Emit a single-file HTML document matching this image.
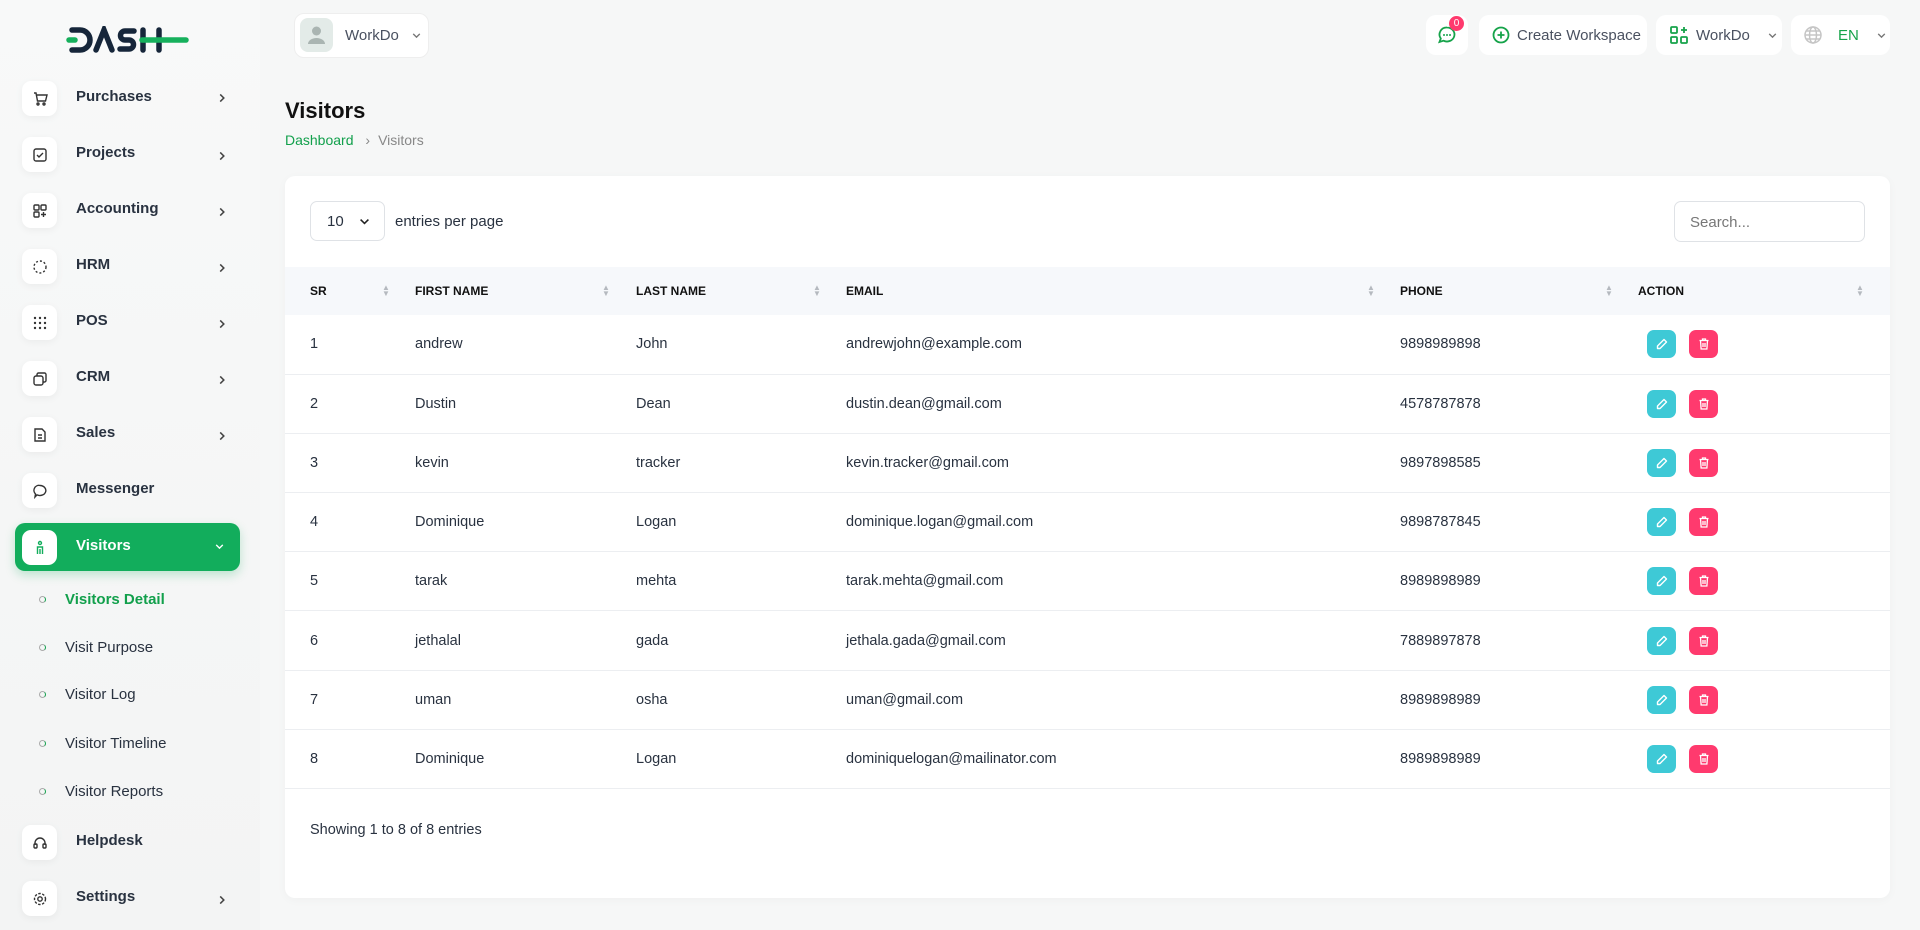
<!DOCTYPE html>
<html><head><meta charset="utf-8"><style>
*{box-sizing:border-box;margin:0;padding:0}
body{width:1920px;height:930px;overflow:hidden;background:#f6f7f7;font-family:"Liberation Sans",sans-serif;color:#293240;position:relative}
.a{position:absolute}
.ib{position:absolute;left:22px;width:35px;height:35px;background:#fff;border-radius:9px;box-shadow:0 2px 8px rgba(0,0,0,.05);display:flex;align-items:center;justify-content:center}
.lb{position:absolute;left:76px;font-size:15px;font-weight:bold;color:#293240}
.ch{position:absolute;left:216px}
.sub{position:absolute;left:65px;font-size:15px;color:#293240}
.dot{position:absolute;left:39px;width:7px;height:7px;border-radius:50%;border:1.5px solid #aaa;border-right-color:#12a04c}
.btn{position:absolute;top:15px;height:40px;background:#fff;border-radius:10px;display:flex;align-items:center;font-size:15px;color:#4a5160}
th{font-size:12px;font-weight:bold;color:#111;text-align:left;height:48px;background:#f6f8fb;position:relative}
td{font-size:14.5px;color:#293240;height:59.2px;border-bottom:1px solid #eceef1}
table{border-collapse:collapse;position:absolute;left:285px;top:267px;width:1605px}
.s{position:absolute;top:18px;font-size:8px;color:#b5b9bf;line-height:6px}
.e,.d{display:inline-flex;align-items:center;justify-content:center;width:29px;height:28px;border-radius:7px;vertical-align:middle}
.e{background:#3ec9d6}.d{background:#ff3a6e;margin-left:13px}
</style></head><body>
<svg width="0" height="0" style="position:absolute"><defs>
<symbol id="chr" viewBox="0 0 10 10"><path d="M3.5 2l3 3-3 3" fill="none" stroke="#444" stroke-width="1.3"/></symbol>
<symbol id="chd" viewBox="0 0 10 10"><path d="M2 3.5l3 3 3-3" fill="none" stroke="currentColor" stroke-width="1.2"/></symbol>
<symbol id="pen" viewBox="0 0 14 14"><path d="M9 2.5l2.5 2.5-6.5 6.5H2.5V9z" fill="none" stroke="#fff" stroke-width="1.4" stroke-linejoin="round"/></symbol>
<symbol id="trash" viewBox="0 0 14 14"><path d="M2.5 3.5h9M5.5 3.5V2h3v1.5M3.5 3.5l.6 8.5h5.8l.6-8.5M6 6v4M8 6v4" fill="none" stroke="#fff" stroke-width="1.3"/></symbol>
</defs></svg>
<div class="a" style="left:0;top:0;width:260px;height:930px;background:linear-gradient(#f8f9f9,#f3f4f4)"></div>
<svg class="a" style="left:66px;top:26px" width="124" height="28" viewBox="0 0 124 28"><g fill="none" stroke="#16263a" stroke-width="5.5" stroke-linecap="round"><path d="M6 4h8a10 10 0 0 1 0 20H6"/><path d="M30 24L38 4l8 20"/><path d="M68 5h-9a4.5 4.5 0 0 0 0 9h4a4.5 4.5 0 0 1 0 9h-9"/><path d="M77 4v20M93 4v20"/></g><path d="M3 14h6" stroke="#16b05c" stroke-width="5.5" stroke-linecap="round"/><path d="M76 14h44" stroke="#16b05c" stroke-width="5.5" stroke-linecap="round"/></svg>
<div class="a" style="left:294px;top:13px;width:135px;height:45px;background:#fff;border-radius:10px;border:1px solid #eee"></div>
<div class="a" style="left:300px;top:18px;width:33px;height:34px;background:#e3ebe8;border-radius:8px"><svg width="33" height="34"><circle cx="16.5" cy="13" r="4.5" fill="#aab5b2"/><path d="M8 26a8.5 6 0 0 1 17 0z" fill="#aab5b2"/></svg></div>
<div class="a" style="left:345px;top:27px;font-size:15px;color:#4a5160">WorkDo</div>
<svg class="a" style="left:411px;top:30px;color:#777" width="11" height="11"><use href="#chd"/></svg>

<div class="btn" style="left:1426px;width:42px;justify-content:center"><svg width="20" height="20" viewBox="0 0 20 20"><path d="M10 2.5a7.5 7 0 1 1-3.5 13.2L2.5 17l1.3-3.5A7 7 0 0 1 10 2.5z" fill="none" stroke="#16a34a" stroke-width="1.8"/><circle cx="7" cy="10" r="1" fill="#16a34a"/><circle cx="10" cy="10" r="1" fill="#16a34a"/><circle cx="13" cy="10" r="1" fill="#16a34a"/></svg></div>
<div class="a" style="left:1449px;top:16px;width:15px;height:15px;border-radius:50%;background:#ff3a6e;color:#fff;font-size:10px;text-align:center;line-height:15px">0</div>
<div class="btn" style="left:1479px;width:168px;padding-left:12px"><svg width="20" height="20" style="margin-right:6px"><circle cx="10" cy="10" r="7.5" fill="none" stroke="#16a34a" stroke-width="1.8"/><path d="M10 6.5v7M6.5 10h7" stroke="#16a34a" stroke-width="1.8"/></svg>Create Workspace</div>
<div class="btn" style="left:1656px;width:126px;padding-left:13px"><svg width="20" height="20" style="margin-right:7px" fill="none" stroke="#16a34a" stroke-width="1.8"><rect x="2" y="2" width="6" height="6" rx="1"/><rect x="2" y="12" width="6" height="6" rx="1"/><rect x="12" y="12" width="6" height="6" rx="1"/><path d="M15 2v6M12 5h6"/></svg>WorkDo<svg width="11" height="11" style="margin-left:17px;color:#777"><use href="#chd"/></svg></div>
<div class="btn" style="left:1791px;width:99px;padding-left:12px"><svg width="20" height="20" style="margin-right:15px" fill="none" stroke="#c5c5c5" stroke-width="1.5"><circle cx="10" cy="10" r="8"/><ellipse cx="10" cy="10" rx="3.5" ry="8"/><path d="M2 10h16M3.5 6h13M3.5 14h13"/></svg><span style="color:#16a34a">EN</span><svg width="11" height="11" style="margin-left:17px;color:#777"><use href="#chd"/></svg></div>

<div class="ib" style="top:81px"><svg width="16" height="16" fill="none" stroke="#333" stroke-width="1.4"><path d="M2 2h2l1.5 8h8l1.5-6H5"/><circle cx="6" cy="13" r="1"/><circle cx="12" cy="13" r="1"/></svg></div><div class="lb" style="top:88px">Purchases</div><svg class="ch" style="top:92px" width="12" height="12"><use href="#chr"/></svg>
<div class="ib" style="top:137px"><svg width="16" height="16" fill="none" stroke="#333" stroke-width="1.4"><rect x="2" y="2" width="12" height="12" rx="2"/><path d="M5 8l2 2 4-4"/></svg></div><div class="lb" style="top:144px">Projects</div><svg class="ch" style="top:150px" width="12" height="12"><use href="#chr"/></svg>
<div class="ib" style="top:193px"><svg width="16" height="16" fill="none" stroke="#333" stroke-width="1.4"><rect x="2" y="2" width="5" height="5" rx="1"/><rect x="9" y="2" width="5" height="5" rx="1"/><rect x="2" y="9" width="5" height="5" rx="1"/><path d="M11.5 9v5M9 11.5h5"/></svg></div><div class="lb" style="top:200px">Accounting</div><svg class="ch" style="top:206px" width="12" height="12"><use href="#chr"/></svg>
<div class="ib" style="top:249px"><svg width="16" height="16" fill="none" stroke="#333" stroke-width="1.4" stroke-dasharray="2 2"><circle cx="8" cy="8" r="6"/></svg></div><div class="lb" style="top:256px">HRM</div><svg class="ch" style="top:262px" width="12" height="12"><use href="#chr"/></svg>
<div class="ib" style="top:305px"><svg width="16" height="16" fill="#333"><circle cx="3" cy="3" r="1.2"/><circle cx="8" cy="3" r="1.2"/><circle cx="13" cy="3" r="1.2"/><circle cx="3" cy="8" r="1.2"/><circle cx="8" cy="8" r="1.2"/><circle cx="13" cy="8" r="1.2"/><circle cx="3" cy="13" r="1.2"/><circle cx="8" cy="13" r="1.2"/><circle cx="13" cy="13" r="1.2"/></svg></div><div class="lb" style="top:312px">POS</div><svg class="ch" style="top:318px" width="12" height="12"><use href="#chr"/></svg>
<div class="ib" style="top:361px"><svg width="16" height="16" fill="none" stroke="#333" stroke-width="1.4"><rect x="2" y="5" width="9" height="9" rx="2"/><path d="M5 5V3.5A1.5 1.5 0 0 1 6.5 2H12.5A1.5 1.5 0 0 1 14 3.5v6a1.5 1.5 0 0 1-1.5 1.5H11"/></svg></div><div class="lb" style="top:368px">CRM</div><svg class="ch" style="top:374px" width="12" height="12"><use href="#chr"/></svg>
<div class="ib" style="top:417px"><svg width="16" height="16" fill="none" stroke="#333" stroke-width="1.4"><path d="M3 2h7l3 3v9H3z"/><path d="M6 8h4M6 11h4"/></svg></div><div class="lb" style="top:424px">Sales</div><svg class="ch" style="top:430px" width="12" height="12"><use href="#chr"/></svg>
<div class="ib" style="top:473px"><svg width="16" height="16" fill="none" stroke="#333" stroke-width="1.4"><path d="M8 2.5a6 5 0 1 1-3 9.4L3 14l.5-3A5 5 0 0 1 8 2.5z"/></svg></div><div class="lb" style="top:480px">Messenger</div>
<div class="a" style="left:15px;top:523px;width:225px;height:48px;background:#12ad5c;border-radius:10px;box-shadow:0 4px 10px rgba(18,173,92,.25)"></div>
<div class="ib" style="top:530px;box-shadow:none"><svg width="16" height="16" fill="none" stroke="#12ad5c" stroke-width="1.4"><circle cx="8" cy="3" r="1.5"/><path d="M5.5 14V7h5v7M8 9v5"/></svg></div><div class="lb" style="top:537px;color:#fff">Visitors</div><svg class="a" style="left:214px;top:541px;color:#fff" width="11" height="11"><use href="#chd"/></svg>
<div class="dot" style="top:596px"></div><div class="sub" style="top:591px;color:#12a04c;font-weight:bold">Visitors Detail</div>
<div class="dot" style="top:644px"></div><div class="sub" style="top:639px">Visit Purpose</div>
<div class="dot" style="top:691px"></div><div class="sub" style="top:686px">Visitor Log</div>
<div class="dot" style="top:740px"></div><div class="sub" style="top:735px">Visitor Timeline</div>
<div class="dot" style="top:788px"></div><div class="sub" style="top:783px">Visitor Reports</div>
<div class="ib" style="top:825px"><svg width="16" height="16" fill="none" stroke="#333" stroke-width="1.4"><path d="M3 10V8a5 5 0 0 1 10 0v2"/><rect x="2" y="9" width="3" height="4" rx="1"/><rect x="11" y="9" width="3" height="4" rx="1"/></svg></div><div class="lb" style="top:832px">Helpdesk</div>
<div class="ib" style="top:881px"><svg width="16" height="16" fill="none" stroke="#333" stroke-width="1.4"><circle cx="8" cy="8" r="2.2"/><circle cx="8" cy="8" r="5.5" stroke-dasharray="2.5 1.5"/></svg></div><div class="lb" style="top:888px">Settings</div><svg class="ch" style="top:894px" width="12" height="12"><use href="#chr"/></svg>

<div class="a" style="left:285px;top:98px;font-size:22px;font-weight:bold;color:#111">Visitors</div>
<div class="a" style="left:285px;top:132px;font-size:14px;color:#12a04c">Dashboard <span style="color:#888;margin:0 8px">&#8250;</span><span style="color:#888">Visitors</span></div>

<div class="a" style="left:285px;top:176px;width:1605px;height:722px;background:#fff;border-radius:10px;box-shadow:0 2px 10px rgba(0,0,0,.03)"></div>
<div class="a" style="left:310px;top:201px;width:75px;height:40px;border:1px solid #dfe2e6;border-radius:7px;font-size:15px;padding:11px 16px">10<svg style="position:absolute;right:13px;top:13px;color:#222" width="13" height="13"><use href="#chd"/></svg></div>
<div class="a" style="left:395px;top:213px;font-size:15px">entries per page</div>
<div class="a" style="left:1674px;top:201px;width:191px;height:41px;border:1px solid #dfe2e6;border-radius:7px;font-size:15px;color:#777;padding:12px 15px">Search...</div>

<table>
<tr><th style="padding-left:25px;width:130px">SR<span class="s" style="left:97px">▲<br>▼</span></th><th style="width:221px">FIRST NAME<span class="s" style="left:187px">▲<br>▼</span></th><th style="width:210px">LAST NAME<span class="s" style="left:177px">▲<br>▼</span></th><th style="width:554px">EMAIL<span class="s" style="left:521px">▲<br>▼</span></th><th style="width:238px">PHONE<span class="s" style="left:205px">▲<br>▼</span></th><th>ACTION<span class="s" style="left:218px">▲<br>▼</span></th></tr>
<tr><td style="padding-left:25px">1</td><td>andrew</td><td>John</td><td>andrewjohn@example.com</td><td>9898989898</td><td style="padding-left:9px"><span class="e"><svg width="14" height="14"><use href="#pen"/></svg></span><span class="d"><svg width="14" height="14"><use href="#trash"/></svg></span></td></tr>
<tr><td style="padding-left:25px">2</td><td>Dustin</td><td>Dean</td><td>dustin.dean@gmail.com</td><td>4578787878</td><td style="padding-left:9px"><span class="e"><svg width="14" height="14"><use href="#pen"/></svg></span><span class="d"><svg width="14" height="14"><use href="#trash"/></svg></span></td></tr>
<tr><td style="padding-left:25px">3</td><td>kevin</td><td>tracker</td><td>kevin.tracker@gmail.com</td><td>9897898585</td><td style="padding-left:9px"><span class="e"><svg width="14" height="14"><use href="#pen"/></svg></span><span class="d"><svg width="14" height="14"><use href="#trash"/></svg></span></td></tr>
<tr><td style="padding-left:25px">4</td><td>Dominique</td><td>Logan</td><td>dominique.logan@gmail.com</td><td>9898787845</td><td style="padding-left:9px"><span class="e"><svg width="14" height="14"><use href="#pen"/></svg></span><span class="d"><svg width="14" height="14"><use href="#trash"/></svg></span></td></tr>
<tr><td style="padding-left:25px">5</td><td>tarak</td><td>mehta</td><td>tarak.mehta@gmail.com</td><td>8989898989</td><td style="padding-left:9px"><span class="e"><svg width="14" height="14"><use href="#pen"/></svg></span><span class="d"><svg width="14" height="14"><use href="#trash"/></svg></span></td></tr>
<tr><td style="padding-left:25px">6</td><td>jethalal</td><td>gada</td><td>jethala.gada@gmail.com</td><td>7889897878</td><td style="padding-left:9px"><span class="e"><svg width="14" height="14"><use href="#pen"/></svg></span><span class="d"><svg width="14" height="14"><use href="#trash"/></svg></span></td></tr>
<tr><td style="padding-left:25px">7</td><td>uman</td><td>osha</td><td>uman@gmail.com</td><td>8989898989</td><td style="padding-left:9px"><span class="e"><svg width="14" height="14"><use href="#pen"/></svg></span><span class="d"><svg width="14" height="14"><use href="#trash"/></svg></span></td></tr>
<tr><td style="padding-left:25px">8</td><td>Dominique</td><td>Logan</td><td>dominiquelogan@mailinator.com</td><td>8989898989</td><td style="padding-left:9px"><span class="e"><svg width="14" height="14"><use href="#pen"/></svg></span><span class="d"><svg width="14" height="14"><use href="#trash"/></svg></span></td></tr>
</table>
<div class="a" style="left:310px;top:822px;font-size:14.5px">Showing 1 to 8 of 8 entries</div>
</body></html>
